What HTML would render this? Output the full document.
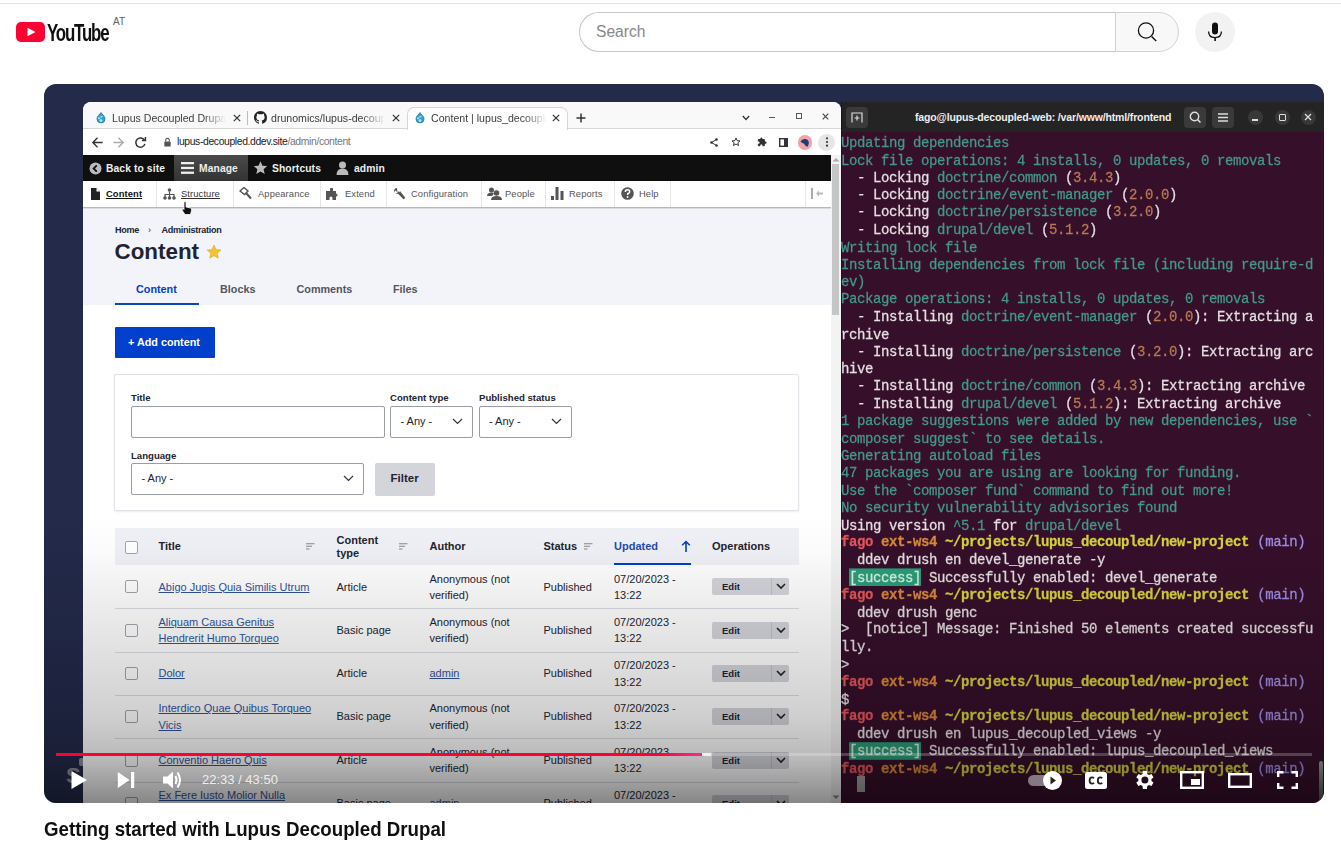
<!DOCTYPE html>
<html><head><meta charset="utf-8">
<style>
*{box-sizing:border-box;margin:0;padding:0}
html,body{width:1341px;height:842px;overflow:hidden;background:#fff;font-family:"Liberation Sans",sans-serif}
.a{position:absolute}
#topline{left:0;top:3px;width:1341px;height:1px;background:#e3e3e3}
#player{left:44px;top:84px;width:1280px;height:719px;border-radius:12px;overflow:hidden;background:#232a4a}
#inner{left:-44px;top:-84px;width:1341px;height:842px}
#title{left:43.5px;top:818px;font-size:20.4px;font-weight:bold;color:#0f0f0f;white-space:nowrap;transform:scaleX(0.917);transform-origin:0 0}
.tabt{font-size:10.6px;color:#3c3c3c;white-space:nowrap;overflow:hidden;-webkit-mask-image:linear-gradient(90deg,#000 80%,transparent)}
.tabx{font-size:11px;color:#333}
.tb{font-size:10.3px;font-weight:bold;color:#eee;white-space:nowrap;letter-spacing:0.1px;margin-top:1px}
.t2{top:187.5px;font-size:9.4px;color:#555;white-space:nowrap;letter-spacing:0.1px}
.sep{top:181px;width:1px;height:27px;background:#e6e6e6}
.bc{letter-spacing:-0.3px;font-size:9.1px;font-weight:bold;color:#222330;white-space:nowrap}
.tab{top:283px;font-size:10.8px;font-weight:bold;color:#545560;white-space:nowrap}
.lbl{margin-top:1px;font-size:9.6px;font-weight:bold;color:#222330;white-space:nowrap}
.inp{border:1px solid #9a9ca6;border-radius:2px;background:#fff}
.any{font-size:11px;color:#222330;white-space:nowrap}
.cb{width:13px;height:13px;border:1px solid #a2a4ac;border-radius:2px;background:#fff}
.th{font-size:11px;font-weight:bold;color:#222330;white-space:nowrap}
.td{font-size:11px;color:#222330;white-space:nowrap;line-height:16.2px}
.eb{width:77px;height:17px;background:#d4d5db;border-radius:2px}
.eb span{position:absolute;left:10px;top:3px;font-size:9.5px;font-weight:bold;color:#222330}
.eb i{position:absolute;left:59px;top:0;width:1px;height:17px;background:#bfc0c6}
#tt{-webkit-text-stroke:0.25px currentColor;left:841px;top:135.2px;font-family:"Liberation Mono",monospace;font-size:14px;letter-spacing:-0.4px;line-height:15.79px;white-space:pre;color:#e4e0e2;transform:scaleY(1.1);transform-origin:0 0}
#tt .t{color:#43988a}#tt .o{color:#b87a52}#tt .r{color:#e4565a;font-weight:bold}#tt .o2{color:#d9893a;font-weight:bold}#tt .y{color:#d4d23e;font-weight:bold}#tt .m{color:#a08ee6}
#tt .s{background:#2a9d78;color:#d8f0e4}
.tbtn{background:#3a3a3a;border-radius:4px}
.tcir{top:109.5px;width:15px;height:15px;border-radius:50%;background:#383838}
</style></head>
<body>
<div class="a" id="topline"></div>

<!-- YouTube logo -->
<svg class="a" style="left:16px;top:22px" width="29" height="20" viewBox="0 0 29 20"><rect x="0" y="0" width="29" height="20" rx="5" fill="#ff0033"/><path d="M11.5 5.8 L19.5 10 L11.5 14.2 Z" fill="#fff"/></svg>
<div class="a" style="left:47px;top:20px;font-size:23px;letter-spacing:-1.6px;color:#0f0f0f;transform:scaleX(0.733);transform-origin:0 0;font-weight:bold;">YouTube</div>
<div class="a" style="left:113px;top:16px;font-size:10px;color:#606060">AT</div>

<!-- search -->
<div class="a" style="left:579px;top:12px;width:537px;height:40px;border:1px solid #c6c6c6;border-right:none;border-radius:20px 0 0 20px;background:#fff"></div>
<div class="a" style="left:596px;top:23px;font-size:15.6px;color:#888">Search</div>
<div class="a" style="left:1115px;top:12px;width:64px;height:40px;border:1px solid #d3d3d3;border-radius:0 20px 20px 0;background:#f8f8f8"></div>
<svg class="a" style="left:1134px;top:19px" width="26" height="26" viewBox="0 0 26 26"><circle cx="12" cy="11.5" r="7.6" fill="none" stroke="#0f0f0f" stroke-width="1.3"/><path d="M17.6 17.4 L22.2 22" stroke="#0f0f0f" stroke-width="1.4"/></svg>
<div class="a" style="left:1195px;top:12px;width:40px;height:40px;border-radius:50%;background:#f2f2f2"></div>
<svg class="a" style="left:1203px;top:20px" width="24" height="24" viewBox="0 0 24 24"><rect x="9" y="2.6" width="6" height="12" rx="3" fill="#0f0f0f"/><path d="M5.6 11.5 Q5.6 17.6 12 17.6 Q18.4 17.6 18.4 11.5" fill="none" stroke="#0f0f0f" stroke-width="1.3"/><rect x="11.3" y="17.4" width="1.6" height="3.6" fill="#0f0f0f"/></svg>

<div class="a" id="player"><div class="a" id="inner">
<!-- BROWSER -->
<div class="a" style="left:79px;top:758px;width:8px;height:8px;border-radius:2px;background:#8a8d96"></div>
<div class="a" style="left:66px;top:763px;font-size:22px;font-weight:bold;color:#8a8d96">S</div>
<div class="a" id="browser" style="left:83px;top:102px;width:758px;height:720px;background:#fff;border-radius:8px 8px 0 0;overflow:hidden">
<div class="a" style="left:-83px;top:-102px;width:1341px;height:842px">
<!-- tab bar -->
<div class="a" style="left:83px;top:102px;width:758px;height:27px;background:#f9f9f9;border-bottom:1px solid #d6d6d6"></div>
<div class="a" style="left:407px;top:107px;width:161px;height:23px;background:#fff;border:1px solid #d6d6d6;border-bottom:none;border-radius:7px 7px 0 0"></div>
<svg class="a" style="left:96px;top:112px" width="10" height="11.5" viewBox="0 0 10 11.5"><path d="M5 0.6 C6.2 2.5 9 4.2 9 6.9 A4 4 0 0 1 1 6.9 C1 4.2 3.8 2.5 5 0.6Z" fill="#3aa0cc" stroke="#2a7fa8" stroke-width="0.9"/><circle cx="3" cy="6.3" r="1" fill="#a8f0ff"/><path d="M4.3 5.3 L6.6 4.2" stroke="#a8f0ff" stroke-width="1.1"/><circle cx="5" cy="8.6" r="1.4" fill="#a8f0ff"/></svg>
<div class="a tabt" style="left:112px;top:112px;width:114px">Lupus Decoupled Drupal</div>
<svg class="a" style="left:233px;top:114px" width="8" height="8" viewBox="0 0 8 8"><path d="M0.8 0.8 L7.2 7.2 M7.2 0.8 L0.8 7.2" stroke="#333" stroke-width="1.2"/></svg>
<div class="a" style="left:247px;top:111px;width:1px;height:14px;background:#bbb"></div>
<svg class="a" style="left:254px;top:111px" width="13" height="13" viewBox="0 0 16 16"><path fill="#222" d="M8 0C3.58 0 0 3.58 0 8c0 3.54 2.29 6.53 5.47 7.59.4.07.55-.17.55-.38 0-.19-.01-.82-.01-1.49-2.01.37-2.53-.49-2.69-.94-.09-.23-.48-.94-.82-1.13-.28-.15-.68-.52-.01-.53.63-.01 1.08.58 1.23.82.72 1.21 1.87.87 2.33.66.07-.52.28-.87.51-1.07-1.78-.2-3.640-.89-3.64-3.95 0-.87.31-1.59.82-2.15-.08-.2-.36-1.02.08-2.12 0 0 .67-.21 2.200.82.64-.18 1.32-.27 2-.27.68 0 1.36.09 2 .27 1.53-1.040 2.2-.82 2.2-.82.44 1.1.16 1.92.08 2.12.51.56.82 1.27.82 2.15 0 3.07-1.87 3.750-3.65 3.95.29.25.54.73.54 1.480 0 1.07-.01 1.93-.01 2.2 0 .21.15.46.55.38A8.013 8.013 0 0016 8c0-4.42-3.58-8-8-8z"/></svg>
<div class="a tabt" style="left:271px;top:112px;width:114px">drunomics/lupus-decoupled</div>
<svg class="a" style="left:392px;top:114px" width="8" height="8" viewBox="0 0 8 8"><path d="M0.8 0.8 L7.2 7.2 M7.2 0.8 L0.8 7.2" stroke="#333" stroke-width="1.2"/></svg>
<svg class="a" style="left:415px;top:112px" width="10" height="11.5" viewBox="0 0 10 11.5"><path d="M5 0.6 C6.2 2.5 9 4.2 9 6.9 A4 4 0 0 1 1 6.9 C1 4.2 3.8 2.5 5 0.6Z" fill="#3aa0cc" stroke="#2a7fa8" stroke-width="0.9"/><circle cx="3" cy="6.3" r="1" fill="#a8f0ff"/><path d="M4.3 5.3 L6.6 4.2" stroke="#a8f0ff" stroke-width="1.1"/><circle cx="5" cy="8.6" r="1.4" fill="#a8f0ff"/></svg>
<div class="a tabt" style="left:431px;top:112px;width:116px">Content | lupus_decoupled</div>
<svg class="a" style="left:552px;top:114px" width="8" height="8" viewBox="0 0 8 8"><path d="M0.8 0.8 L7.2 7.2 M7.2 0.8 L0.8 7.2" stroke="#333" stroke-width="1.2"/></svg>
<svg class="a" style="left:576px;top:113px" width="10" height="10" viewBox="0 0 10 10"><path d="M5 0.5 V9.5 M0.5 5 H9.5" stroke="#333" stroke-width="1.5"/></svg>
<svg class="a" style="left:742px;top:115px" width="8" height="6" viewBox="0 0 8 6"><path d="M0.8 1 L4 4.5 L7.2 1" fill="none" stroke="#333" stroke-width="1.3"/></svg>
<div class="a" style="left:769px;top:117px;width:6px;height:1.2px;background:#555"></div>
<div class="a" style="left:796px;top:113px;width:6px;height:6px;border:1.1px solid #555"></div>
<svg class="a" style="left:822px;top:113px" width="7" height="7" viewBox="0 0 7 7"><path d="M0.7 0.7 L6.3 6.3 M6.3 0.7 L0.7 6.3" stroke="#444" stroke-width="1.1"/></svg>
<!-- nav bar -->
<svg class="a" style="left:91px;top:136px" width="13" height="13" viewBox="0 0 14 14"><path d="M12.5 7 H2 M7 2 L2 7 L7 12" fill="none" stroke="#333" stroke-width="1.5"/></svg>
<svg class="a" style="left:112px;top:136px" width="13" height="13" viewBox="0 0 14 14"><path d="M1.5 7 H12 M7 2 L12 7 L7 12" fill="none" stroke="#aaa" stroke-width="1.5"/></svg>
<svg class="a" style="left:134px;top:136px" width="13" height="13" viewBox="0 0 14 14"><path d="M11.3 4.5 A5 5 0 1 0 11.8 8.5" fill="none" stroke="#333" stroke-width="1.6"/><path d="M8.5 4.8 L12.3 4.8 L12.3 1" fill="none" stroke="#333" stroke-width="1.6"/></svg>
<svg class="a" style="left:163px;top:137px" width="9" height="10" viewBox="0 0 9 11"><rect x="1" y="5" width="7" height="5.5" rx="1" fill="#555"/><path d="M2.5 5 V3.5 A2 2 0 0 1 6.5 3.5 V5" fill="none" stroke="#555" stroke-width="1.2"/></svg>
<div class="a" style="left:177px;top:136px;font-size:10.4px;color:#222;white-space:nowrap;letter-spacing:-0.38px">lupus-decoupled.ddev.site<span style="color:#777">/admin/content</span></div>
<svg class="a" style="left:710px;top:137.5px" width="8" height="9" viewBox="0 0 8 9"><circle cx="6.5" cy="1.5" r="1.3" fill="#333"/><circle cx="1.5" cy="4.5" r="1.3" fill="#333"/><circle cx="6.5" cy="7.5" r="1.3" fill="#333"/><path d="M6.5 1.5 L1.5 4.5 L6.5 7.5" fill="none" stroke="#333" stroke-width="1"/></svg>
<svg class="a" style="left:730.5px;top:137px" width="10" height="10" viewBox="0 0 24 24"><path d="M12 2.5 L14.9 8.8 L21.7 9.4 L16.5 13.9 L18.1 20.6 L12 17 L5.9 20.6 L7.5 13.9 L2.3 9.4 L9.1 8.8Z" fill="none" stroke="#333" stroke-width="2.4"/></svg>
<svg class="a" style="left:757px;top:137px" width="10" height="10" viewBox="0 0 24 24"><path fill="#333" d="M20.5 11H19V7c0-1.1-.9-2-2-2h-4V3.5a2.5 2.5 0 0 0-5 0V5H4c-1.1 0-2 .9-2 2v3.8h1.5c1.5 0 2.7 1.2 2.7 2.7S5 16.2 3.5 16.2H2V20c0 1.1.9 2 2 2h3.8v-1.5c0-1.5 1.2-2.7 2.7-2.7s2.7 1.2 2.7 2.7V22H17c1.1 0 2-.9 2-2v-4h1.5a2.5 2.5 0 0 0 0-5z"/></svg>
<svg class="a" style="left:779px;top:137.5px" width="9" height="9" viewBox="0 0 9 9"><rect x="0.7" y="0.7" width="7.6" height="7.6" fill="none" stroke="#333" stroke-width="1.4"/><rect x="5" y="0.7" width="3.3" height="7.6" fill="#333"/></svg>
<div class="a" style="left:797.5px;top:135px;width:14.5px;height:14.5px;border-radius:50%;background:#f2a3a3"></div>
<svg class="a" style="left:799px;top:137px" width="12" height="11" viewBox="0 0 12 11"><path d="M1.5 4.5 Q3 1.5 6.5 2 Q10 2.8 9.8 6.5 L8.8 9.5 Q7 10 6 8 Q5 6 2.5 5.5Z" fill="#1c3d7a"/></svg>
<div class="a" style="left:818px;top:133.5px;width:17px;height:17px;border-radius:50%;background:#e6e6e6"></div>
<svg class="a" style="left:824.5px;top:137px" width="4" height="10" viewBox="0 0 4 10"><circle cx="2" cy="1.3" r="1.1" fill="#333"/><circle cx="2" cy="5" r="1.1" fill="#333"/><circle cx="2" cy="8.7" r="1.1" fill="#333"/></svg>
<!-- drupal toolbar -->
<div class="a" style="left:83px;top:155px;width:748px;height:26px;background:#0f0f0f"></div>
<div class="a" style="left:174px;top:155px;width:74px;height:26px;background:linear-gradient(#4a4a4a,#333)"></div>
<svg class="a" style="left:89px;top:162px" width="13" height="13" viewBox="0 0 13 13"><circle cx="6.5" cy="6.5" r="6" fill="#bbb"/><path d="M7.8 3.3 L4.6 6.5 L7.8 9.7" fill="none" stroke="#0f0f0f" stroke-width="1.8"/></svg>
<div class="a tb" style="left:106px;top:162px">Back to site</div>
<svg class="a" style="left:181px;top:161px" width="14" height="14" viewBox="0 0 14 14"><rect x="0" y="1" width="13" height="2.3" fill="#eee"/><rect x="0" y="5.8" width="13" height="2.3" fill="#eee"/><rect x="0" y="10.6" width="13" height="2.3" fill="#eee"/></svg>
<div class="a tb" style="left:199px;top:162px">Manage</div>
<svg class="a" style="left:253px;top:161px" width="15" height="14" viewBox="0 0 24 23"><path d="M12 0.5 L15.2 7.7 L23 8.4 L17.1 13.6 L18.9 21.4 L12 17.3 L5.1 21.4 L6.9 13.6 L1 8.4 L8.8 7.7Z" fill="#bbb"/></svg>
<div class="a tb" style="left:272px;top:162px">Shortcuts</div>
<svg class="a" style="left:336px;top:161px" width="13" height="14" viewBox="0 0 13 14"><circle cx="6.5" cy="4" r="3.5" fill="#bbb"/><path d="M0.5 14 Q0.5 7.5 6.5 7.5 Q12.5 7.5 12.5 14Z" fill="#bbb"/></svg>
<div class="a tb" style="left:354px;top:162px">admin</div>
<!-- secondary toolbar -->
<div class="a" style="left:83px;top:181px;width:748px;height:27px;background:#fff;box-shadow:0 1px 2px rgba(0,0,0,.3)"></div>
<div class="a sep" style="left:156px"></div><div class="a sep" style="left:233px"></div><div class="a sep" style="left:320px"></div><div class="a sep" style="left:386px"></div><div class="a sep" style="left:481px"></div><div class="a sep" style="left:545px"></div><div class="a sep" style="left:614px"></div><div class="a sep" style="left:670px"></div><div class="a sep" style="left:805px"></div>
<svg class="a" style="left:91px;top:188px" width="9" height="12" viewBox="0 0 9 12"><path d="M0 0 H5.5 L9 3.5 V12 H0Z" fill="#222"/><path d="M5.5 0 V3.5 H9" fill="#fff"/></svg>
<div class="a t2" style="left:106px;color:#111;font-weight:bold;text-decoration:underline">Content</div>
<svg class="a" style="left:163px;top:188px" width="13" height="12" viewBox="0 0 13 12"><circle cx="6.5" cy="2" r="1.8" fill="#555"/><path d="M6.5 3.5 V6 M2 10 V6.5 H11 V10 M6.5 6.5 V10" fill="none" stroke="#555" stroke-width="1.2"/><circle cx="2" cy="10" r="1.8" fill="#555"/><circle cx="6.5" cy="10" r="1.8" fill="#555"/><circle cx="11" cy="10" r="1.8" fill="#555"/></svg>
<div class="a t2" style="left:181px;color:#333;text-decoration:underline">Structure</div>
<svg class="a" style="left:239px;top:187px" width="13" height="13" viewBox="0 0 13 13"><path d="M1 4 L5 0.5 L9 4 L5.5 7.5Z" fill="none" stroke="#555" stroke-width="1.4"/><path d="M7 6 L12 11.5" stroke="#555" stroke-width="2"/></svg>
<div class="a t2" style="left:258px">Appearance</div>
<svg class="a" style="left:326px;top:188px" width="14" height="12" viewBox="0 0 14 12"><path d="M0 3 H4 V1 A1.5 1.5 0 0 1 7 1 V3 H10 V5.5 A1.5 1.5 0 0 1 10 8.5 V12 H6.5 V10 A1.5 1.5 0 0 0 3.5 10 V12 H0Z" fill="#555"/></svg>
<div class="a t2" style="left:345px">Extend</div>
<svg class="a" style="left:393px;top:187px" width="13" height="13" viewBox="0 0 13 13"><path d="M4 1 A3.2 3.2 0 0 0 1 5 L2.5 3.5 L4.5 5.5 L3 7 A3.2 3.2 0 0 0 7 4 L12 10.5 L10.5 12 L4.5 6" fill="#555"/><path d="M5 5 L11.5 11.5" stroke="#555" stroke-width="2.2"/></svg>
<div class="a t2" style="left:411px">Configuration</div>
<svg class="a" style="left:487px;top:187px" width="15" height="13" viewBox="0 0 15 13"><circle cx="4.5" cy="3" r="2.5" fill="#555"/><path d="M0 9 Q0 5.5 4.5 5.5 Q6 5.5 7 6.5 L5 9Z" fill="#555"/><circle cx="9.5" cy="6" r="2.8" fill="#555"/><path d="M4 13 Q4 9 9.5 9 Q15 9 15 13Z" fill="#555"/></svg>
<div class="a t2" style="left:505px">People</div>
<svg class="a" style="left:551px;top:187px" width="13" height="13" viewBox="0 0 13 13"><rect x="0" y="9" width="3" height="4" fill="#555"/><rect x="4.5" y="0" width="3" height="13" fill="#555"/><rect x="9.5" y="4" width="3" height="9" fill="#555"/></svg>
<div class="a t2" style="left:569px">Reports</div>
<svg class="a" style="left:621px;top:187px" width="13" height="13" viewBox="0 0 13 13"><circle cx="6.5" cy="6.5" r="6.3" fill="#555"/><path d="M4.3 5 Q4.3 2.7 6.5 2.7 Q8.7 2.7 8.7 4.7 Q8.7 6 6.7 6.8 V8" fill="none" stroke="#fff" stroke-width="1.5"/><circle cx="6.6" cy="10" r="0.9" fill="#fff"/></svg>
<div class="a t2" style="left:639px">Help</div>
<svg class="a" style="left:811px;top:188px" width="13" height="11" viewBox="0 0 13 11"><rect x="0" y="0" width="2" height="11" fill="#aaa"/><path d="M5 5.5 L8 2.5 V4.5 H12 V6.5 H8 V8.5Z" fill="#bbb"/></svg>

<!-- breadcrumb/title -->
<div class="a" style="left:83px;top:208px;width:748px;height:97px;background:#f3f4f9"></div>
<div class="a" style="left:83px;top:207px;width:748px;height:1px;background:#b8b8b8"></div><div class="a" style="left:83px;top:208px;width:748px;height:1px;background:#dcdcdc"></div>
<div class="a bc" style="left:115px;top:225px">Home</div>
<div class="a bc" style="left:148px;top:225px;font-weight:normal">&#x203A;</div>
<div class="a bc" style="left:161.5px;top:225px">Administration</div>
<div class="a" style="left:114.5px;top:239px;font-size:22.4px;font-weight:bold;color:#222330;letter-spacing:0px">Content</div>
<svg class="a" style="left:206px;top:244px" width="16" height="16" viewBox="0 0 24 24"><path d="M12 1.5 L15.1 8.3 L22.5 9 L16.9 14 L18.5 21.3 L12 17.5 L5.5 21.3 L7.1 14 L1.5 9 L8.9 8.3Z" fill="#f4c430" stroke="#d6a520" stroke-width="0.8"/></svg>
<div class="a tab" style="left:136px;color:#003ecc">Content</div>
<div class="a tab" style="left:220px">Blocks</div>
<div class="a tab" style="left:296.5px">Comments</div>
<div class="a tab" style="left:393px">Files</div>
<div class="a" style="left:115px;top:302.5px;width:84px;height:2.5px;background:#0a45c4"></div>
<!-- add content -->
<div class="a" style="left:115px;top:327px;width:100px;height:31px;background:#003ecc;border-radius:1px"></div>
<div class="a" style="left:128px;top:336px;font-size:10.8px;font-weight:bold;color:#fff;white-space:nowrap">+ Add content</div>
<!-- filter box -->
<div class="a" style="left:114px;top:374px;width:685px;height:137px;border:1px solid #e2e3e8;border-radius:2px;box-shadow:0 1px 2px rgba(0,0,0,.08);background:#fff"></div>
<div class="a lbl" style="left:131px;top:391px">Title</div>
<div class="a inp" style="left:131px;top:406px;width:254px;height:32px"></div>
<div class="a lbl" style="left:390px;top:391px">Content type</div>
<div class="a inp" style="left:390px;top:406px;width:83px;height:32px"></div>
<div class="a any" style="left:400.5px;top:415px">- Any -</div>
<svg class="a chev" style="left:452px;top:418px" width="11" height="7" viewBox="0 0 11 7"><path d="M1 1 L5.5 5.5 L10 1" fill="none" stroke="#333" stroke-width="1.2"/></svg>
<div class="a lbl" style="left:479px;top:391px">Published status</div>
<div class="a inp" style="left:479px;top:406px;width:93px;height:32px"></div>
<div class="a any" style="left:489px;top:415px">- Any -</div>
<svg class="a chev" style="left:551px;top:418px" width="11" height="7" viewBox="0 0 11 7"><path d="M1 1 L5.5 5.5 L10 1" fill="none" stroke="#333" stroke-width="1.2"/></svg>
<div class="a lbl" style="left:131px;top:449px">Language</div>
<div class="a inp" style="left:131px;top:463px;width:233px;height:32px"></div>
<div class="a any" style="left:141.5px;top:472px">- Any -</div>
<svg class="a chev" style="left:343px;top:475px" width="11" height="7" viewBox="0 0 11 7"><path d="M1 1 L5.5 5.5 L10 1" fill="none" stroke="#333" stroke-width="1.2"/></svg>
<div class="a" style="left:375px;top:463px;width:60px;height:33px;background:#d4d5db;border-radius:2px"></div>
<div class="a" style="left:390.5px;top:472px;font-size:11.5px;font-weight:bold;color:#222330">Filter</div>
<!-- table header -->
<div class="a" style="left:115px;top:528px;width:684px;height:37px;background:#f0f1f6"></div>
<div class="a cb" style="left:125px;top:541px"></div>
<div class="a th" style="left:158.5px;top:540px">Title</div>
<svg class="a srt" style="left:306px;top:543px" width="9" height="7" viewBox="0 0 9 7"><path d="M0 0.7 H8.5 M0 3.3 H6 M0 6 H3.5" stroke="#888" stroke-width="1.1"/></svg>
<div class="a th" style="left:336.5px;top:534px;line-height:13px">Content<br>type</div>
<svg class="a srt" style="left:398.5px;top:543px" width="9" height="7" viewBox="0 0 9 7"><path d="M0 0.7 H8.5 M0 3.3 H6 M0 6 H3.5" stroke="#888" stroke-width="1.1"/></svg>
<div class="a th" style="left:429.5px;top:540px">Author</div>
<div class="a th" style="left:543.5px;top:540px">Status</div>
<svg class="a srt" style="left:583.5px;top:543px" width="9" height="7" viewBox="0 0 9 7"><path d="M0 0.7 H8.5 M0 3.3 H6 M0 6 H3.5" stroke="#888" stroke-width="1.1"/></svg>
<div class="a th" style="left:614px;top:540px;color:#1f4bb8">Updated</div>
<svg class="a" style="left:681px;top:540px" width="10" height="13" viewBox="0 0 10 13"><path d="M5 12 V1.5 M1.2 5.2 L5 1.5 L8.8 5.2" fill="none" stroke="#003ecc" stroke-width="1.6"/></svg>
<div class="a" style="left:614px;top:563px;width:77px;height:2px;background:#003ecc"></div>
<div class="a th" style="left:712px;top:540px">Operations</div>
<div class="a" style="left:115px;top:608.4px;width:684px;height:1px;background:#dcdde3"></div>
<div class="a cb" style="left:125px;top:580.4px"></div>
<div class="a td" style="left:158.5px;top:578.6px;color:#30539e;text-decoration:underline;"><div>Abigo Jugis Quia Similis Utrum</div></div>
<div class="a td" style="left:336.5px;top:578.6px;"><div>Article</div></div>
<div class="a td" style="left:429.5px;top:570.5px;"><div>Anonymous (not</div><div>verified)</div></div>
<div class="a td" style="left:543.5px;top:578.6px;"><div>Published</div></div>
<div class="a td" style="left:614px;top:570.5px;"><div>07/20/2023 -</div><div>13:22</div></div>
<div class="a eb" style="left:712px;top:578.2px"><span>Edit</span><i></i><svg class="a" style="left:64px;top:5px" width="10" height="7" viewBox="0 0 10 7"><path d="M1 1 L5 5 L9 1" fill="none" stroke="#222" stroke-width="1.6"/></svg></div>
<div class="a" style="left:115px;top:651.8px;width:684px;height:1px;background:#dcdde3"></div>
<div class="a cb" style="left:125px;top:623.8px"></div>
<div class="a td" style="left:158.5px;top:613.9px;color:#30539e;text-decoration:underline;"><div>Aliquam Causa Genitus</div><div>Hendrerit Humo Torqueo</div></div>
<div class="a td" style="left:336.5px;top:622.0px;"><div>Basic page</div></div>
<div class="a td" style="left:429.5px;top:613.9px;"><div>Anonymous (not</div><div>verified)</div></div>
<div class="a td" style="left:543.5px;top:622.0px;"><div>Published</div></div>
<div class="a td" style="left:614px;top:613.9px;"><div>07/20/2023 -</div><div>13:22</div></div>
<div class="a eb" style="left:712px;top:621.6px"><span>Edit</span><i></i><svg class="a" style="left:64px;top:5px" width="10" height="7" viewBox="0 0 10 7"><path d="M1 1 L5 5 L9 1" fill="none" stroke="#222" stroke-width="1.6"/></svg></div>
<div class="a" style="left:115px;top:695.2px;width:684px;height:1px;background:#dcdde3"></div>
<div class="a cb" style="left:125px;top:667.2px"></div>
<div class="a td" style="left:158.5px;top:665.4px;color:#30539e;text-decoration:underline;"><div>Dolor</div></div>
<div class="a td" style="left:336.5px;top:665.4px;"><div>Article</div></div>
<div class="a td" style="left:429.5px;top:665.4px;color:#30539e;text-decoration:underline;"><div>admin</div></div>
<div class="a td" style="left:543.5px;top:665.4px;"><div>Published</div></div>
<div class="a td" style="left:614px;top:657.3px;"><div>07/20/2023 -</div><div>13:22</div></div>
<div class="a eb" style="left:712px;top:665.0px"><span>Edit</span><i></i><svg class="a" style="left:64px;top:5px" width="10" height="7" viewBox="0 0 10 7"><path d="M1 1 L5 5 L9 1" fill="none" stroke="#222" stroke-width="1.6"/></svg></div>
<div class="a" style="left:115px;top:738.2px;width:684px;height:1px;background:#dcdde3"></div>
<div class="a cb" style="left:125px;top:710.2px"></div>
<div class="a td" style="left:158.5px;top:700.3px;color:#30539e;text-decoration:underline;"><div>Interdico Quae Quibus Torqueo</div><div>Vicis</div></div>
<div class="a td" style="left:336.5px;top:708.4px;"><div>Basic page</div></div>
<div class="a td" style="left:429.5px;top:700.3px;"><div>Anonymous (not</div><div>verified)</div></div>
<div class="a td" style="left:543.5px;top:708.4px;"><div>Published</div></div>
<div class="a td" style="left:614px;top:700.3px;"><div>07/20/2023 -</div><div>13:22</div></div>
<div class="a eb" style="left:712px;top:708.0px"><span>Edit</span><i></i><svg class="a" style="left:64px;top:5px" width="10" height="7" viewBox="0 0 10 7"><path d="M1 1 L5 5 L9 1" fill="none" stroke="#222" stroke-width="1.6"/></svg></div>
<div class="a" style="left:115px;top:781.9px;width:684px;height:1px;background:#dcdde3"></div>
<div class="a cb" style="left:125px;top:753.9px"></div>
<div class="a td" style="left:158.5px;top:752.1px;color:#30539e;text-decoration:underline;"><div>Conventio Haero Quis</div></div>
<div class="a td" style="left:336.5px;top:752.1px;"><div>Article</div></div>
<div class="a td" style="left:429.5px;top:744.0px;"><div>Anonymous (not</div><div>verified)</div></div>
<div class="a td" style="left:543.5px;top:752.1px;"><div>Published</div></div>
<div class="a td" style="left:614px;top:744.0px;"><div>07/20/2023 -</div><div>13:22</div></div>
<div class="a eb" style="left:712px;top:751.7px"><span>Edit</span><i></i><svg class="a" style="left:64px;top:5px" width="10" height="7" viewBox="0 0 10 7"><path d="M1 1 L5 5 L9 1" fill="none" stroke="#222" stroke-width="1.6"/></svg></div>
<div class="a" style="left:115px;top:824.9px;width:684px;height:1px;background:#dcdde3"></div>
<div class="a cb" style="left:125px;top:796.9px"></div>
<div class="a td" style="left:158.5px;top:787.0px;color:#30539e;text-decoration:underline;"><div>Ex Fere Iusto Molior Nulla</div><div>Sed</div></div>
<div class="a td" style="left:336.5px;top:795.1px;"><div>Basic page</div></div>
<div class="a td" style="left:429.5px;top:795.1px;color:#30539e;text-decoration:underline;"><div>admin</div></div>
<div class="a td" style="left:543.5px;top:795.1px;"><div>Published</div></div>
<div class="a td" style="left:614px;top:787.0px;"><div>07/20/2023 -</div><div>13:22</div></div>
<div class="a eb" style="left:712px;top:794.7px"><span>Edit</span><i></i><svg class="a" style="left:64px;top:5px" width="10" height="7" viewBox="0 0 10 7"><path d="M1 1 L5 5 L9 1" fill="none" stroke="#222" stroke-width="1.6"/></svg></div>
<!-- mouse cursor -->
<svg class="a" style="left:181px;top:201px" width="12" height="14" viewBox="0 0 12 14"><path d="M3 1 Q4 0 5 1 V6 L9.5 7 Q11 7.5 10.5 9.5 L9.5 13.5 H4 L1 9 Q0.5 7.5 2.5 8 L3 8.5Z" fill="#111" stroke="#fff" stroke-width="0.8"/></svg>

<!-- page bg -->

<!-- scrollbar -->
<div class="a" style="left:831px;top:155px;width:10px;height:650px;background:#f3f3f3"></div>
<div class="a" style="left:832px;top:164px;width:7px;height:151px;background:#c6c6c6"></div>
<svg class="a" style="left:832px;top:157px" width="8" height="5" viewBox="0 0 8 5"><path d="M0.5 4.5 L4 1 L7.5 4.5Z" fill="#aaa"/></svg>
<svg class="a" style="left:832px;top:795px" width="8" height="5" viewBox="0 0 8 5"><path d="M0.5 0.5 L4 4 L7.5 0.5Z" fill="#888"/></svg>

</div>
</div>
<!-- TERMINAL -->
<div class="a" id="term" style="left:841px;top:102px;width:483px;height:720px;background:#360f2a;overflow:hidden">
<div class="a" style="left:-841px;top:-102px;width:1341px;height:842px">
<div class="a" style="left:841px;top:102px;width:483px;height:30px;background:#242424"></div>
<div class="a tbtn" style="left:846px;top:107px;width:22px;height:21px"></div>
<svg class="a" style="left:851px;top:112px" width="12" height="11" viewBox="0 0 12 11"><path d="M1 10.5 V1 H11 V10.5" fill="none" stroke="#ddd" stroke-width="1.2"/><path d="M6 3.5 V8.5 M3.5 6 H8.5" stroke="#ddd" stroke-width="1.2"/></svg>
<div class="a" style="left:915px;top:111px;font-size:10.5px;font-weight:bold;color:#eee;white-space:nowrap;letter-spacing:-0.15px">fago@lupus-decoupled-web: /var/www/html/frontend</div>
<div class="a tbtn" style="left:1184px;top:107px;width:22px;height:21px"></div>
<svg class="a" style="left:1189px;top:111px" width="13" height="13" viewBox="0 0 13 13"><circle cx="5.5" cy="5.5" r="4.2" fill="none" stroke="#ddd" stroke-width="1.4"/><path d="M8.6 8.6 L11.5 11.5" stroke="#ddd" stroke-width="1.5"/></svg>
<div class="a tbtn" style="left:1212px;top:107px;width:22px;height:21px"></div>
<svg class="a" style="left:1218px;top:113px" width="10" height="9" viewBox="0 0 10 9"><path d="M0 1 H10 M0 4.5 H10 M0 8 H10" stroke="#ddd" stroke-width="1.3"/></svg>
<div class="a tcir" style="left:1247.5px"></div><div class="a" style="left:1252px;top:119px;width:6px;height:1.5px;background:#ddd"></div>
<div class="a tcir" style="left:1274.5px"></div><div class="a" style="left:1278.5px;top:113.5px;width:7px;height:7px;border:1.3px solid #ddd;border-radius:1px"></div>
<div class="a tcir" style="left:1300.5px"></div><svg class="a" style="left:1304px;top:113px" width="8" height="8" viewBox="0 0 8 8"><path d="M1 1 L7 7 M7 1 L1 7" stroke="#ddd" stroke-width="1.3"/></svg>
<div class="a" style="left:841px;top:102px;width:1px;height:720px;background:#151515"></div>
<div class="a" id="tt"><span class="t">Updating dependencies</span>
<span class="t">Lock file operations: 4 installs, 0 updates, 0 removals</span>
  - Locking <span class="t">doctrine/common</span> (<span class="o">3.4.3</span>)
  - Locking <span class="t">doctrine/event-manager</span> (<span class="o">2.0.0</span>)
  - Locking <span class="t">doctrine/persistence</span> (<span class="o">3.2.0</span>)
  - Locking <span class="t">drupal/devel</span> (<span class="o">5.1.2</span>)
<span class="t">Writing lock file</span>
<span class="t">Installing dependencies from lock file (including require-d</span>
<span class="t">ev)</span>
<span class="t">Package operations: 4 installs, 0 updates, 0 removals</span>
  - Installing <span class="t">doctrine/event-manager</span> (<span class="o">2.0.0</span>): Extracting a
rchive
  - Installing <span class="t">doctrine/persistence</span> (<span class="o">3.2.0</span>): Extracting arc
hive
  - Installing <span class="t">doctrine/common</span> (<span class="o">3.4.3</span>): Extracting archive
  - Installing <span class="t">drupal/devel</span> (<span class="o">5.1.2</span>): Extracting archive
<span class="t">1 package suggestions were added by new dependencies, use `</span>
<span class="t">composer suggest` to see details.</span>
<span class="t">Generating autoload files</span>
<span class="t">47 packages you are using are looking for funding.</span>
<span class="t">Use the `composer fund` command to find out more!</span>
<span class="t">No security vulnerability advisories found</span>
Using version <span class="t">^5.1</span> for <span class="t">drupal/devel</span>
<span class="r">fago</span> <span class="o2">ext-ws4</span> <span class="y">~/projects/lupus_decoupled/new-project</span> <span class="m">(main)</span>
  ddev drush en devel_generate -y
 <span class="s">[success]</span> Successfully enabled: devel_generate
<span class="r">fago</span> <span class="o2">ext-ws4</span> <span class="y">~/projects/lupus_decoupled/new-project</span> <span class="m">(main)</span>
  ddev drush genc
&gt;  [notice] Message: Finished 50 elements created successfu
lly.
&gt;
<span class="r">fago</span> <span class="o2">ext-ws4</span> <span class="y">~/projects/lupus_decoupled/new-project</span> <span class="m">(main)</span>
$
<span class="r">fago</span> <span class="o2">ext-ws4</span> <span class="y">~/projects/lupus_decoupled/new-project</span> <span class="m">(main)</span>
  ddev drush en lupus_decoupled_views -y
 <span class="s">[success]</span> Successfully enabled: lupus_decoupled_views
<span class="r">fago</span> <span class="o2">ext-ws4</span> <span class="y">~/projects/lupus_decoupled/new-project</span> <span class="m">(main)</span></div>
<div class="a" style="left:857px;top:776px;width:8px;height:16px;background:#a0a0a0"></div>
<div class="a" style="left:1318.5px;top:761px;width:4px;height:40px;border-radius:2px;background:linear-gradient(#9a9a9a,#555)"></div>

</div>
</div>

<!-- overlay -->
<div class="a" style="left:44px;top:515px;width:1280px;height:288px;background:linear-gradient(rgba(0,0,0,0) 0%,rgba(0,0,0,0.015) 12%,rgba(0,0,0,0.055) 25%,rgba(0,0,0,0.14) 55%,rgba(0,0,0,0.19) 70%,rgba(0,0,0,0.28) 85%,rgba(0,0,0,0.47) 100%)"></div>
<!-- progress -->
<div class="a" style="left:56px;top:753px;width:1256px;height:3px;background:rgba(255,255,255,0.22)"></div>
<div class="a" style="left:702px;top:753px;width:9px;height:3px;background:rgba(255,255,255,0.7)"></div>
<div class="a" style="left:56px;top:753px;width:646px;height:3px;background:linear-gradient(90deg,#f03 0%,#f03 93%,#ff2791 100%)"></div>
<!-- left controls -->
<svg class="a" style="left:70px;top:770px" width="18" height="20" viewBox="0 0 18 20"><path d="M1.5 1 L17 10 L1.5 19Z" fill="#fff"/></svg>
<svg class="a" style="left:117px;top:771px" width="18" height="18" viewBox="0 0 18 18"><path d="M0.8 1 L12.5 9 L0.8 17Z" fill="#fff"/><rect x="14" y="1" width="3.2" height="16" fill="#fff"/></svg>
<svg class="a" style="left:162px;top:770px" width="22" height="20" viewBox="0 0 22 20"><path d="M1 6.5 H5.5 L11 1.5 V18.5 L5.5 13.5 H1Z" fill="#fff"/><path d="M13.5 6 Q15.5 10 13.5 14" fill="none" stroke="#fff" stroke-width="2"/><path d="M15.5 2.5 Q20.5 10 15.5 17.5" fill="none" stroke="#fff" stroke-width="2"/></svg>
<div class="a" style="left:202px;top:772px;font-size:13px;color:#eee;white-space:nowrap">22:33 / 43:50</div>
<!-- right controls -->
<div class="a" style="left:1028px;top:774.5px;width:28px;height:11px;border-radius:6px;background:rgba(255,255,255,0.45)"></div>
<div class="a" style="left:1043px;top:771px;width:19px;height:19px;border-radius:50%;background:#fff"></div>
<svg class="a" style="left:1043px;top:771px" width="19" height="19" viewBox="0 0 19 19"><path d="M7.5 5.5 L13 9.5 L7.5 13.5Z" fill="#222"/></svg>
<svg class="a" style="left:1085px;top:772px" width="22" height="17" viewBox="0 0 22 17"><rect x="0" y="0" width="22" height="17" rx="2.5" fill="#fff"/><path d="M9 6.3 Q8.3 5.4 7 5.4 Q4.6 5.4 4.6 8.5 Q4.6 11.6 7 11.6 Q8.3 11.6 9 10.7" fill="none" stroke="#222" stroke-width="1.8"/><path d="M17.2 6.3 Q16.5 5.4 15.2 5.4 Q12.8 5.4 12.8 8.5 Q12.8 11.6 15.2 11.6 Q16.5 11.6 17.2 10.7" fill="none" stroke="#222" stroke-width="1.8"/></svg>
<svg class="a" style="left:1132px;top:768px" width="24" height="24" viewBox="0 0 24 24"><path fill="#fff" d="M19.4 13a7.5 7.5 0 0 0 0-2l2.1-1.6-2-3.5-2.5 1a7.6 7.6 0 0 0-1.7-1L14.9 3h-4l-.4 2.9a7.6 7.6 0 0 0-1.7 1l-2.5-1-2 3.5L6.4 11a7.5 7.5 0 0 0 0 2l-2.1 1.6 2 3.5 2.5-1a7.6 7.6 0 0 0 1.7 1l.4 2.9h4l.4-2.9a7.6 7.6 0 0 0 1.7-1l2.5 1 2-3.5zM12.9 15.5a3.5 3.5 0 1 1 0-7 3.5 3.5 0 0 1 0 7z"/></svg>
<svg class="a" style="left:1180px;top:771px" width="24" height="18" viewBox="0 0 24 18"><rect x="1.2" y="1.2" width="21.6" height="15.6" fill="none" stroke="#fff" stroke-width="2.4"/><rect x="11" y="8" width="9" height="6" fill="#fff"/></svg>
<svg class="a" style="left:1228px;top:773px" width="24" height="15" viewBox="0 0 24 15"><rect x="1.2" y="1.2" width="21.6" height="12.6" fill="none" stroke="#fff" stroke-width="2.4"/></svg>
<svg class="a" style="left:1277px;top:771px" width="21" height="18" viewBox="0 0 21 18"><path d="M1.2 6 V1.2 H6.5 M14.5 1.2 H19.8 V6 M19.8 12 V16.8 H14.5 M6.5 16.8 H1.2 V12" fill="none" stroke="#fff" stroke-width="2.4"/></svg>
</div></div>

<div class="a" id="title">Getting started with Lupus Decoupled Drupal</div>
</body></html>
